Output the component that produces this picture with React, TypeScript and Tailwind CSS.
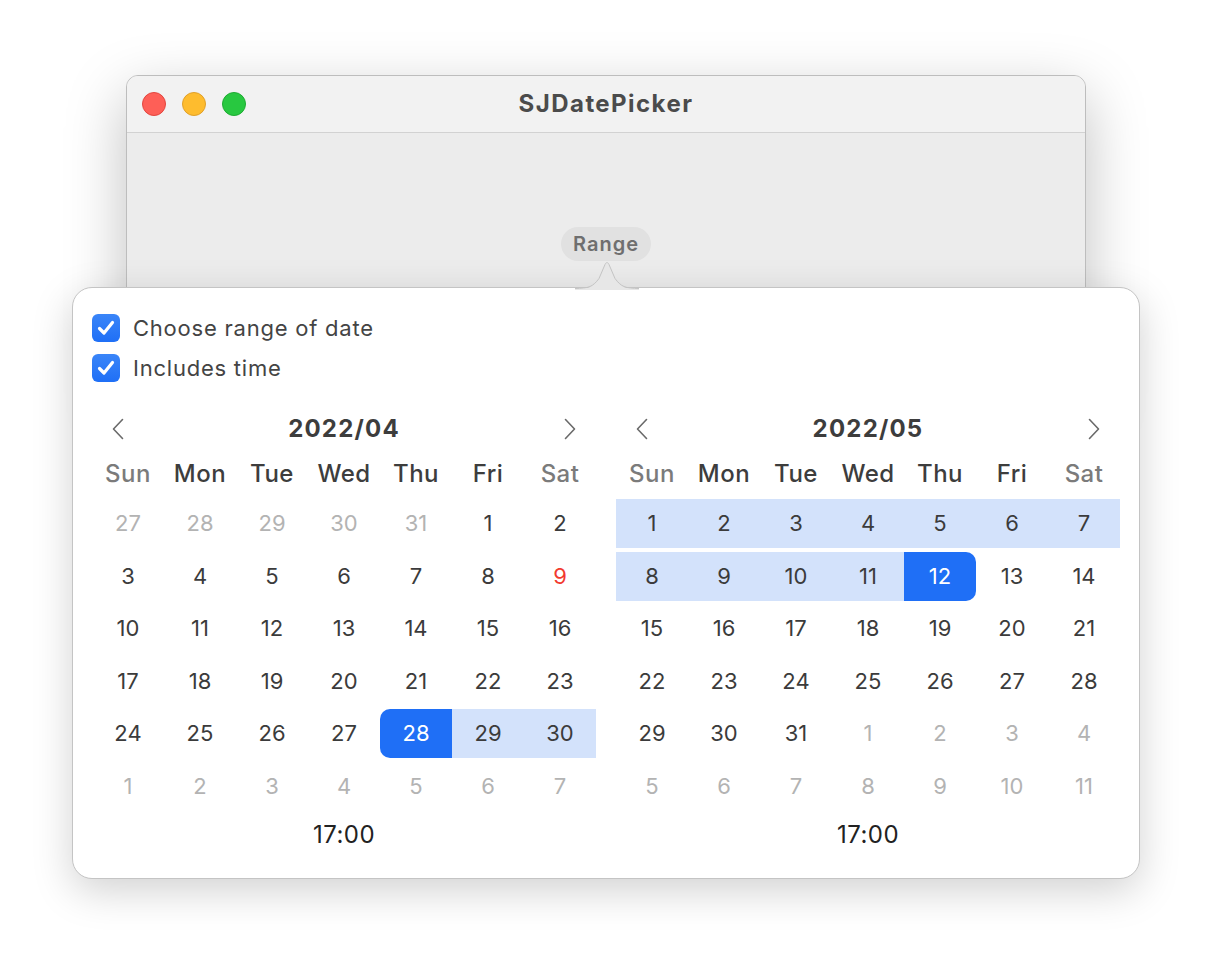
import React from 'react';

type Kind = 'normal' | 'muted' | 'red' | 'range' | 'start' | 'end';
type Day = { d: number; k: Kind };

const weekdays = ['Sun', 'Mon', 'Tue', 'Wed', 'Thu', 'Fri', 'Sat'];

// helpers to build rows
const row = (nums: number[], k: Kind = 'normal'): Day[] => nums.map((d) => ({ d, k }));

const april: Day[][] = [
  [...row([27, 28, 29, 30, 31], 'muted'), ...row([1, 2])],
  [...row([3, 4, 5, 6, 7, 8]), { d: 9, k: 'red' }],
  row([10, 11, 12, 13, 14, 15, 16]),
  row([17, 18, 19, 20, 21, 22, 23]),
  [...row([24, 25, 26, 27]), { d: 28, k: 'start' }, ...row([29, 30], 'range')],
  row([1, 2, 3, 4, 5, 6, 7], 'muted'),
];

const may: Day[][] = [
  row([1, 2, 3, 4, 5, 6, 7], 'range'),
  [...row([8, 9, 10, 11], 'range'), { d: 12, k: 'end' }, ...row([13, 14])],
  row([15, 16, 17, 18, 19, 20, 21]),
  row([22, 23, 24, 25, 26, 27, 28]),
  [...row([29, 30, 31]), ...row([1, 2, 3, 4], 'muted')],
  row([5, 6, 7, 8, 9, 10, 11], 'muted'),
];

const cellClass: Record<Kind, string> = {
  normal: 'text-[#3b3b3b]',
  muted: 'text-[#b3b3b3]',
  red: 'text-[#f23a30]',
  range: 'bg-[#d3e2fb] text-[#3b3b3b]',
  start: 'bg-[#1f6ff6] text-white rounded-l-[10px]',
  end: 'bg-[#1f6ff6] text-white rounded-r-[10px]',
};

function Chevron({ dir }: { dir: 'left' | 'right' }) {
  return (
    <svg width="12" height="22" viewBox="0 0 12 22" fill="none">
      <path
        d={dir === 'left' ? 'M10.5 1.5 L1.5 11 L10.5 20.5' : 'M1.5 1.5 L10.5 11 L1.5 20.5'}
        stroke="#6a6a6a"
        strokeWidth="1.6"
        strokeLinecap="round"
        strokeLinejoin="round"
      />
    </svg>
  );
}

function Calendar({ title, weeks }: { title: string; weeks: Day[][] }) {
  return (
    <div className="w-[504px]">
      <div className="h-[40px] flex items-center justify-between px-[20px]">
        <Chevron dir="left" />
        <div className="text-[24px] font-bold tracking-[0.05em] text-[#3d3d3d]">{title}</div>
        <Chevron dir="right" />
      </div>
      <div className="grid grid-cols-7 h-[50px] items-center">
        {weekdays.map((w, i) => (
          <div
            key={w}
            className={`text-center text-[24px] font-medium tracking-[0.02em] ${
              i === 0 || i === 6 ? 'text-[#7b7b7b]' : 'text-[#3d3d3d]'
            }`}
          >
            {w}
          </div>
        ))}
      </div>
      <div className="flex flex-col">
        {weeks.map((wk, r) => (
          <div key={r} className="grid grid-cols-7 h-[52.5px]">
            {wk.map((day, c) => (
              <div
                key={c}
                className={`h-[49px] flex items-center justify-center text-[22px] ${cellClass[day.k]}`}
              >
                {day.d}
              </div>
            ))}
          </div>
        ))}
      </div>
      <div className="h-[42px] flex items-center justify-center text-[24px] tracking-[0.02em] text-[#222]">
        17:00
      </div>
    </div>
  );
}

function Check({ label }: { label: string }) {
  return (
    <div className="flex items-center h-[28px] gap-[13px]">
      <div className="w-[28px] h-[28px] rounded-[6px] bg-gradient-to-b from-[#3a85f8] to-[#1f6ff6] flex items-center justify-center">
        <svg width="18" height="16" viewBox="0 0 18 16" fill="none">
          <path
            d="M2.5 8.5 L7 13 L15.5 2.5"
            stroke="white"
            strokeWidth="3.2"
            strokeLinecap="round"
            strokeLinejoin="round"
          />
        </svg>
      </div>
      <span className="text-[22px] tracking-[0.035em] text-[#444]">{label}</span>
    </div>
  );
}

export default function App() {
  return (
    <div
      className="w-[1212px] h-[958px] bg-white overflow-hidden pt-[75px]"
      style={{ fontFamily: 'Inter, "Noto Sans", sans-serif' }}
    >
      {/* Window */}
      <div className="ml-[126px] w-[960px] h-[330px] rounded-[12px] border border-[#bdbdbd] bg-[#ececec] shadow-[0_20px_60px_rgba(0,0,0,0.25)] overflow-hidden">
        <div className="h-[57px] bg-[#f2f2f2] border-b border-[#d2d2d2] relative flex items-center justify-center">
          <div className="absolute left-[15px] top-[16px] flex gap-[16px]">
            <div className="w-[24px] h-[24px] rounded-full bg-[#fe5f57] border border-[#e2463f]" />
            <div className="w-[24px] h-[24px] rounded-full bg-[#febc2e] border border-[#e0a02a]" />
            <div className="w-[24px] h-[24px] rounded-full bg-[#28c840] border border-[#1eab32]" />
          </div>
          <div className="text-[24px] font-bold tracking-[0.06em] text-[#4b4b4b]">SJDatePicker</div>
        </div>
        <div className="flex justify-center pt-[94px]">
          <div className="h-[34px] px-[12px] rounded-full bg-[#e1e1e1] flex items-center text-[20px] font-semibold tracking-[0.05em] text-[#6f6f6f]">
            Range
          </div>
        </div>
      </div>

      {/* Popover */}
      <div className="relative mt-[-118px] ml-[72px] w-[1068px] rounded-[20px] border border-[#c4c4c4] bg-white shadow-[0_12px_40px_rgba(0,0,0,0.18)] px-[19px] pt-[26px] pb-[22px]">
        <svg
          className="absolute left-[502px] top-[-27px]"
          width="64"
          height="29"
          viewBox="0 0 64 29"
          fill="none"
        >
          <path
            d="M0 28 C 14 28, 18 26, 24 18 L 30 4 C 31 1.5, 33 1.5, 34 4 L 40 18 C 46 26, 50 28, 64 28 L 64 29 L 0 29 Z"
            fill="#e7e7e7"
          />
          <path
            d="M0 27.5 C 14 27.5, 18 25.5, 24 17.5 L 30 3.5 C 31 1, 33 1, 34 3.5 L 40 17.5 C 46 25.5, 50 27.5, 64 27.5"
            stroke="#c4c4c4"
            strokeWidth="1"
          />
        </svg>
        <div className="flex flex-col gap-[12px]">
          <Check label="Choose range of date" />
          <Check label="Includes time" />
        </div>
        <div className="flex gap-[20px] mt-[27px]">
          <Calendar title="2022/04" weeks={april} />
          <Calendar title="2022/05" weeks={may} />
        </div>
      </div>
    </div>
  );
}
